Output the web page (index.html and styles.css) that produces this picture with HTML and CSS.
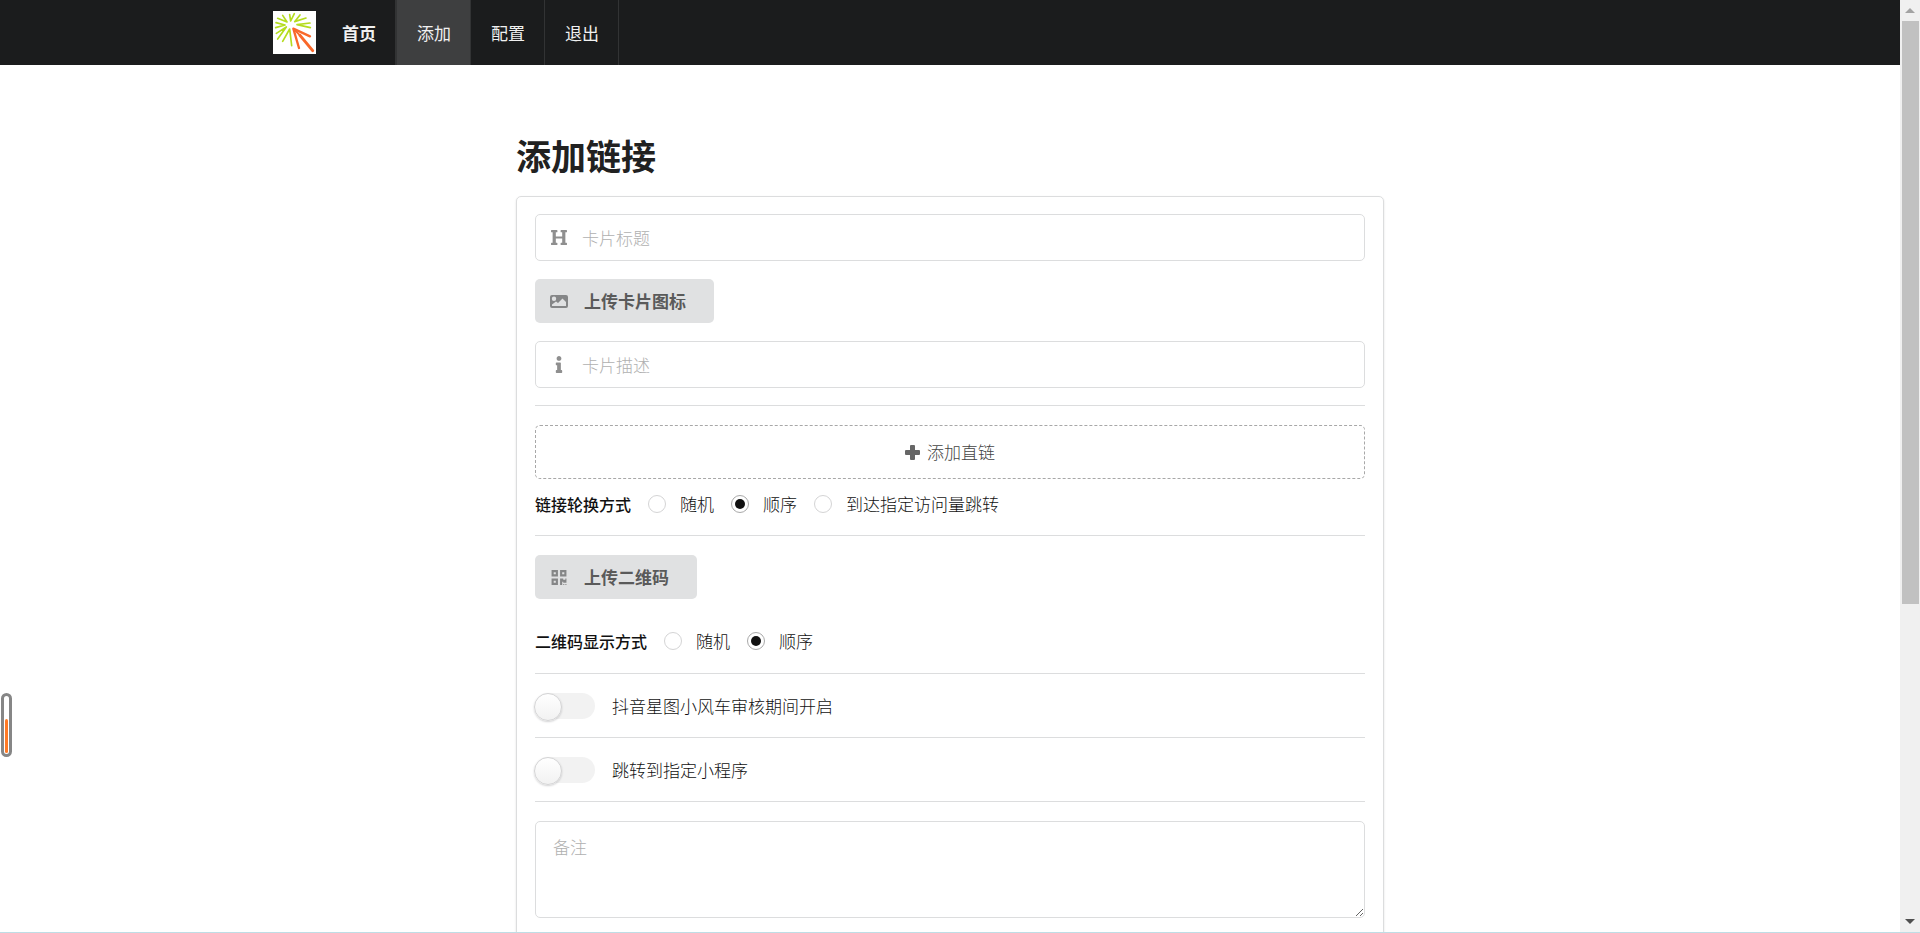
FILE: index.html
```html
<!DOCTYPE html>
<html lang="zh-CN">
<head>
<meta charset="utf-8">
<title>添加链接</title>
<link rel="stylesheet" href="styles.css">
</head>
<body>
<div class="app">
  <div class="page">
    <nav class="navbar">
      <div class="navbar-inner">
        <a class="brand" href="#">
          <svg class="logo" viewBox="0 0 129 129" aria-hidden="true">
            <rect width="129" height="129" fill="#fff"/>
            <g fill="none" stroke="#b4dc1e" stroke-width="5" stroke-linecap="round" stroke-linejoin="round">
              <path d="M29 91 50 54l6 50M10 67 40 48 14 84M9 35l27 7L8 50M14 22l28 11L29 13M50 11l3 19L64 8M81 12 65 32 99 21M111 36 72 41l40 9"/>
            </g>
            <g fill="none" stroke="#f9682a" stroke-linecap="round" stroke-linejoin="round">
              <path d="M78 111 61 53l50 23" stroke-width="7"/>
              <path d="M81 73l38 46" stroke-width="9"/>
              <path d="M63 55l18 18" stroke-width="6"/>
            </g>
          </svg>
          <span>首页</span>
        </a>
        <a class="nav-item active" href="#">添加</a>
        <a class="nav-item" href="#">配置</a>
        <a class="nav-item" href="#">退出</a>
      </div>
    </nav>
    <main class="content">
      <h1 class="title">添加链接</h1>
      <form class="card">
        <div class="field">
          <svg class="icon" viewBox="0 0 512 512" aria-hidden="true"><path d="M448 96v320h32a16 16 0 0 1 16 16v32a16 16 0 0 1-16 16H320a16 16 0 0 1-16-16v-32a16 16 0 0 1 16-16h32V288H160v128h32a16 16 0 0 1 16 16v32a16 16 0 0 1-16 16H32a16 16 0 0 1-16-16v-32a16 16 0 0 1 16-16h32V96H32a16 16 0 0 1-16-16V48a16 16 0 0 1 16-16h160a16 16 0 0 1 16 16v32a16 16 0 0 1-16 16h-32v128h192V96h-32a16 16 0 0 1-16-16V48a16 16 0 0 1 16-16h160a16 16 0 0 1 16 16v32a16 16 0 0 1-16 16z"/></svg>
          <input type="text" placeholder="卡片标题" aria-label="卡片标题">
        </div>
        <button type="button" class="upload">
          <svg class="icon" viewBox="0 0 18 17" aria-hidden="true"><path fill-rule="evenodd" d="M2 2h14q2 0 2 2v9q0 2-2 2H2q-2 0-2-2V4q0-2 2-2zM4 3.500a2.200 2.200 0 1 0 0 4.400a2.200 2.200 0 0 0 0-4.400zM2 13h14V9l-3.500-3.500L8 10 6 8.500 2 11.500z"/></svg>
          <span>上传卡片图标</span>
        </button>
        <div class="field">
          <svg class="icon" viewBox="0 0 192 512" aria-hidden="true"><path d="M20 424.229h20V279.771H20c-11.046 0-20-8.954-20-20V212c0-11.046 8.954-20 20-20h112c11.046 0 20 8.954 20 20v212.229h20c11.046 0 20 8.954 20 20V492c0 11.046-8.954 20-20 20H20c-11.046 0-20-8.954-20-20v-47.771c0-11.046 8.954-20 20-20zM96 0C56.235 0 24 32.235 24 72s32.235 72 72 72 72-32.235 72-72S135.764 0 96 0z"/></svg>
          <input type="text" placeholder="卡片描述" aria-label="卡片描述">
        </div>
        <hr>
        <button type="button" class="add-link">
          <svg class="plus" viewBox="0 0 15 15" aria-hidden="true"><path d="M6 0h3q1 0 1 1v4h4q1 0 1 1v3q0 1-1 1h-4v4q0 1-1 1H6q-1 0-1-1v-4H1q-1 0-1-1V6q0-1 1-1h4V1q0-1 1-1z"/></svg>
          <span>添加直链</span>
        </button>
        <div class="options" role="radiogroup" aria-labelledby="rotate">
          <span class="options-label" id="rotate">链接轮换方式</span>
          <label class="radio"><input type="radio" name="rotate">随机</label>
          <label class="radio"><input type="radio" name="rotate" checked>顺序</label>
          <label class="radio"><input type="radio" name="rotate">到达指定访问量跳转</label>
        </div>
        <hr>
        <button type="button" class="upload">
          <svg class="icon" viewBox="0 0 448 512" aria-hidden="true"><path d="M0 224h192V32H0v192zM64 96h64v64H64V96zm192-64v192h192V32H256zm128 128h-64V96h64v64zM0 480h192V288H0v192zm64-128h64v64H64v-64zm352-64h32v128h-96v-32h-32v96h-64V288h96v32h64v-32zm0 160h32v32h-32v-32zm-64 0h32v32h-32v-32z"/></svg>
          <span>上传二维码</span>
        </button>
        <div class="options" role="radiogroup" aria-labelledby="display">
          <span class="options-label" id="display">二维码显示方式</span>
          <label class="radio"><input type="radio" name="display">随机</label>
          <label class="radio"><input type="radio" name="display" checked>顺序</label>
        </div>
        <hr>
        <label class="toggle"><input type="checkbox">抖音星图小风车审核期间开启</label>
        <hr>
        <label class="toggle"><input type="checkbox">跳转到指定小程序</label>
        <hr>
        <textarea placeholder="备注" aria-label="备注"></textarea>
      </form>
    </main>
  </div>
  <div class="scrollbar" aria-hidden="true">
    <span class="arrow up"></span>
    <span class="track"><span class="thumb"></span></span>
    <span class="arrow down"></span>
  </div>
  <div class="gauge" aria-hidden="true"><span></span></div>
</div>
</body>
</html>
```

FILE: styles.css
```css
* {
  box-sizing: border-box;
}

body {
  margin: 0;
  background: #fff;
  color: #111;
  font: 300 17px/24px "Noto Sans CJK SC", sans-serif;
}

.app {
  position: relative;
  display: grid;
  grid-template-columns: 1fr 20px;
  height: 100vh;
  overflow: hidden;
  border-bottom: 1px solid #bfdde5;
}

.page {
  min-width: 0;
  min-height: 0;
  overflow: hidden;
}

.navbar {
  background: #1b1c1d;
  color: #f0f0f0;
  font-weight: 400;
}

.navbar-inner {
  display: flex;
  width: 100%;
  max-width: 1354px;
  height: 65px;
  margin: 0 auto;
}

.navbar a {
  color: inherit;
  text-decoration: none;
}

.brand {
  display: flex;
  align-items: center;
  gap: 26px;
  padding-right: 19px;
  border-right: 2px solid #323334;
  font-weight: 700;
}

.logo {
  width: 43px;
  height: 43px;
}

.nav-item {
  display: flex;
  align-items: center;
  padding: 0 19px 0 20px;
  border-right: 1px solid #323334;
}

.nav-item.active {
  background: #3e3f40;
}

.content {
  width: 100%;
  max-width: 868px;
  margin: 0 auto;
  padding-top: 67px;
}

.title {
  margin: 0 0 19px;
  color: #212121;
  font-size: 35px;
  font-weight: 700;
  line-height: 45px;
}

.card {
  display: flex;
  flex-direction: column;
  gap: 18px;
  padding: 17px 18px 36px;
  border: 1px solid #dcddde;
  border-radius: 5px;
  box-shadow: 0 1px 2px rgba(34, 36, 38, 0.15);
}

.field {
  display: grid;
  align-items: center;
}

.field > * {
  grid-area: 1 / 1;
}

.icon {
  width: 18px;
  height: 17px;
  fill: #8f8f8f;
}

.field .icon {
  margin-left: 15px;
}

input[type="text"],
textarea {
  width: 100%;
  border: 1px solid #dcddde;
  border-radius: 5px;
  background: transparent;
  color: inherit;
  font: inherit;
  outline: 0;
}

input[type="text"] {
  height: 47px;
  padding: 0 17px 0 46px;
}

::placeholder {
  color: #b0b0b0;
}

.upload {
  display: flex;
  align-self: flex-start;
  align-items: center;
  gap: 16px;
  height: 44px;
  padding: 0 28px 0 15px;
  border: 0;
  border-radius: 5px;
  background: #e0e1e2;
  color: #5a5a5a;
  font: inherit;
  font-weight: 700;
}

.upload .icon {
  fill: #858687;
}

hr {
  width: 100%;
  height: 1px;
  margin: 0 0 1px;
  border: 0;
  background: #dcddde;
}

.field + hr {
  margin-top: -1px;
}

.add-link {
  display: flex;
  align-items: center;
  justify-content: center;
  gap: 7px;
  height: 54px;
  border: 1px dashed #a8a8a8;
  border-radius: 5px;
  background: #fff;
  color: #444;
  font: inherit;
}

.plus {
  width: 15px;
  height: 15px;
  fill: #666;
}

.options {
  display: flex;
  align-items: center;
  gap: 17px;
}

.add-link + .options {
  margin-top: -5px;
  padding-bottom: 1px;
}

.upload + .options {
  padding: 12px 0 2px;
}

.options-label {
  font-size: 16px;
  font-weight: 500;
}

.radio {
  display: flex;
  align-items: center;
  gap: 14px;
}

.radio input {
  display: grid;
  place-items: center;
  width: 18px;
  height: 18px;
  margin: 0;
  border: 1px solid #d4d4d5;
  border-radius: 50%;
  appearance: none;
}

.radio input:checked {
  border-color: #a9a9a9;
}

.radio input:checked::before {
  width: 10px;
  height: 10px;
  border-radius: 50%;
  background: #111;
  content: "";
}

.toggle {
  display: flex;
  align-items: center;
  gap: 17px;
}

.toggle input {
  width: 60px;
  height: 26px;
  margin: 0;
  border-radius: 13px;
  background: #f2f2f2;
  appearance: none;
}

.toggle input::before {
  display: block;
  width: 26px;
  height: 26px;
  margin-left: -1px;
  border: 1px solid #d4d4d5;
  border-radius: 50%;
  background: linear-gradient(#fff, #f2f2f2);
  box-shadow: 0 1px 2px rgba(34, 36, 38, 0.2);
  content: "";
}

textarea {
  height: 97px;
  padding: 13px 17px;
  resize: vertical;
}

.scrollbar {
  display: flex;
  flex-direction: column;
  align-items: center;
  background: #f0f0f0;
}

.arrow {
  display: flex;
  align-items: center;
  height: 21px;
}

.arrow::before {
  border: 5px solid transparent;
  border-top-width: 0;
  border-bottom: 5px solid #a3a3a3;
  content: "";
}

.arrow.down::before {
  border-top: 5px solid #505050;
  border-bottom: 0 solid transparent;
}

.track {
  flex: 1;
  width: 17px;
}

.thumb {
  display: block;
  height: 65.5%;
  background: #c1c1c1;
}

.gauge {
  position: absolute;
  left: 1px;
  top: 693px;
  display: flex;
  align-items: flex-end;
  width: 11px;
  height: 64px;
  padding: 1px;
  border: 3px solid #868686;
  border-radius: 6px;
}

.gauge span {
  width: 3px;
  height: 34px;
  border-radius: 2px;
  background: #ff7a26;
}
```
